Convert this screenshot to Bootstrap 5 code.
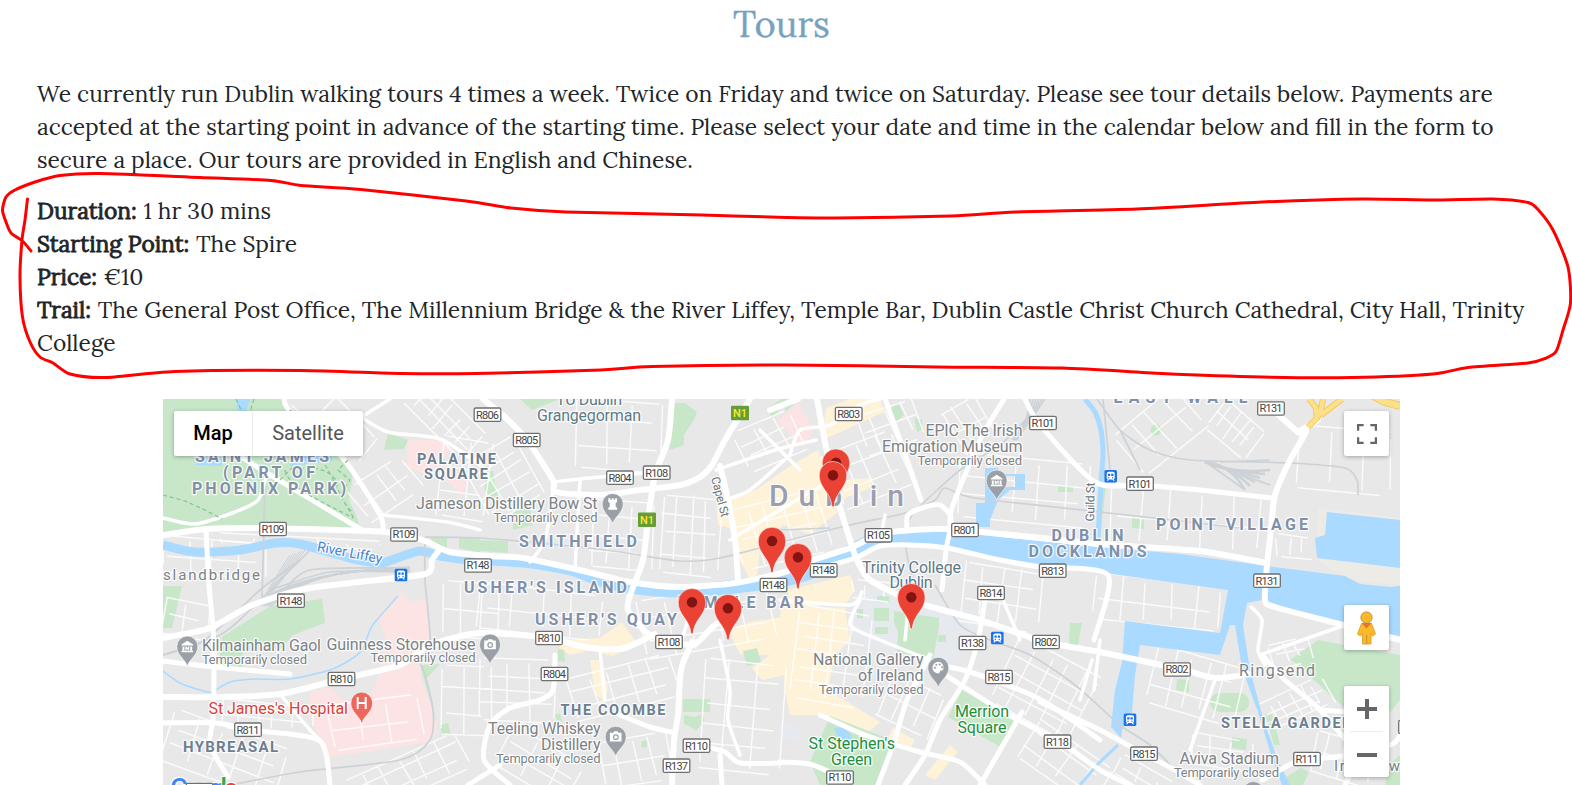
<!DOCTYPE html>
<html lang="en">
<head>
<meta charset="utf-8">
<meta name="viewport" content="width=device-width, initial-scale=1">
<title>Tours</title>
<link href="https://cdn.jsdelivr.net/npm/bootstrap@5.3.0/dist/css/bootstrap.min.css" rel="stylesheet">
<style>
  body { font-family: Lora, "Liberation Serif", serif; font-size: 22.740px; line-height: 33px; color: #212529; overflow: hidden; }
  .page-body { padding: 0 37px; }
  .page-title { font-size: 36.300px; line-height: 43px; color: #76a2c0; margin: 2px 9px 32px 0; -webkit-text-stroke: .3px #76a2c0; }
  .tour-intro { margin-bottom: 18px; }
  .tour-facts { margin-bottom: 40px; }
  .tour-facts strong { font-weight: 400; -webkit-text-stroke: .85px #212529; margin-right: .8px; }
  .map-frame { width: 1237px; height: 386px; margin-left: 126px; font-family: Roboto, "Liberation Sans", sans-serif; }
  .map-ctl { background: #fff; border-radius: 2px; box-shadow: 0 1px 4px rgba(0,0,0,.3); }
  .map-type { left: 11px; top: 12px; height: 45px; font-size: 20px; line-height: 44px; }
  .map-type .tab-map { width: 79px; color: #000; font-weight: 500; border-right: 1px solid #ececec; }
  .map-type .tab-sat { width: 110px; color: #565656; }
  .sq { width: 45px; height: 45px; right: 11px; }
  .full-btn { top: 12px; }
  .peg-btn { top: 206px; }
  .zoom-box { right: 11px; top: 287px; width: 45px; height: 91px; }
  .zoom-box hr { width: 33px; margin: 0; border-color: #bbb; }
  .scribble { left: 0; top: 0; pointer-events: none; }
  .hood { fill: #8090a9; font-weight: 700; }
  .place { fill: #6c7f91; font-weight: 700; }
  .poi { fill: #7c8287; }
  .edu { fill: #5c7a8a; }
  .green { fill: #1e8e3e; }
  .lab text { paint-order: stroke; stroke: #fff; stroke-width: 2.6px; stroke-opacity: .85; stroke-linejoin: round; }
</style>
</head>
<body>
<main class="container-fluid page-body">
  <h1 class="page-title text-center fw-normal">Tours</h1>
  <p class="tour-intro">We currently run Dublin walking tours 4 times a week. Twice on Friday and twice on Saturday. Please see tour details below. Payments are accepted at the starting point in advance of the starting time. Please select your date and time in the calendar below and fill in the form to secure a place. Our tours are provided in English and Chinese.</p>
  <p class="tour-facts"><strong>Duration:</strong> 1 hr 30 mins<br><strong>Starting Point:</strong> The Spire<br><strong>Price:</strong> €10<br><strong>Trail:</strong> The General Post Office, The Millennium Bridge &amp; the River Liffey, Temple Bar, Dublin Castle Christ Church Cathedral, City Hall, Trinity College</p>

  <div class="map-frame position-relative overflow-hidden">
    <svg class="d-block" width="1237" height="386" viewBox="163 399 1237 386">
      <defs>
        <symbol id="museum" viewBox="-7 -7 14 14"><path d="M-6-2 0-6 6-2V-1H-6zM-5 0H-3V4H-5zM3 0H5V4H3zM-6 4.5H6V6H-6zM-2 4V0H-1L0 1.5 1 0H2V4H1V2L0 3.5-1 2V4z" fill="#fff"/></symbol>
        <symbol id="camera" viewBox="-7 -7 14 14"><path fill-rule="evenodd" d="M-6-4H-2.5L-1.5-5.5H2L3-4H6V5H-6zM3.200.5A3 3 0 1 0-2.800.5 3 3 0 1 0 3.200.5" fill="#fff"/><circle cx=".2" cy=".5" r="1.700" fill="#fff"/></symbol>
        <symbol id="rook" viewBox="-7 -7 14 14"><path d="M-4.5-6H-2.5V-4.5H-1V-6H1V-4.5H2.5V-6H4.5V-2L3-1V2.5L4.5 4V6H-4.5V4L-3 2.5V-1L-4.5-2z" fill="#fff"/></symbol>
        <symbol id="palette" viewBox="-7 -7 14 14"><path d="M0-6A6 6 0 1 0 0 6C2 6 1 3.5 2.5 3H4.5C7-1 4-6 0-6" fill="#fff"/><g fill="#9aa0a6"><circle cx="-3.5" cy="0" r="1.1"/><circle cx="-2" cy="-3" r="1.1"/><circle cx="1.5" cy="-3.2" r="1.1"/><circle cx="4" cy="-.5" r="1.1"/></g></symbol>
      </defs>
      <rect x="163" y="399" width="1237" height="386" fill="#e8e8e8"/>

      <!-- campus and hospital grounds -->
      <g fill="#e6eaee"><path d="M853 600 868 589H905L980 616 968 645 950 668 930 668 850 635z"/><path d="M780 720 800 727V740L780 738zM853 595 880 588 905 600"/></g>
      <g fill="#fce4e4">
        <path d="M407 440H445L452 450 440 462 466 480 462 498 447 480 408 468z"/>
        <path d="M402 592 409 601 427 600 430 640 424 665 420 675 437 722 436 733 430 742 325 758 318 735 309 715 310 692 330 687 345 702 372 693 380 672 386 640 380 622 375 618z"/>
        <path d="M777 421 798 403 814 430 803 447z"/>
      </g>

      <!-- commercial blocks -->
      <g fill="#fef3d8">
        <path d="M826 408 850 399H880L884 412 866 420 845 430 822 440zM756 490 790 466 818 450 830 478 838 500 845 480 872 478 870 488 845 498 838 512 810 534 783 525 760 550 757 575 750 580 740 560 736 530 718 525 716 500z"/>
        <path d="M560 640 600 638 622 622 638 645 612 656 590 650 570 655 560 648zM590 660H600L608 688 605 700 595 695zM728 630 750 622 795 615 800 640 785 675 762 680 752 668 770 655 740 654zM780 605 845 608 850 640 835 655 828 690 880 722 865 735 825 715 790 715 785 690z"/>
        <path d="M788 590 850 575 855 590 845 605 790 607zM893 728 915 740 910 748 888 738zM950 745 958 752 935 780 925 775z"/>
      </g>

      <!-- parks -->
      <g fill="#c8e7c9">
        <path d="M163 399H284L290 411 342 457 353 474 349 500 356 515 360 528 260 526 207 529 163 535z"/>
        <path d="M388 433 408 440 404 449 384 450zM430 538H447V548H440zM459 538H480V553L459 548z"/>
        <path d="M520 399H560L532 410zM673 403H685L697 412 694 420 684 435V445L670 450 668 440 672 425zM470 540 508 541V553L470 550zM485 470 493 471 495 485 499 494 492 500 485 490zM513 510 530 508 533 525 513 530z"/>
        <path d="M163 586H182L172 628H163zM222 637 270 606 322 599 325 623 293 635 280 650H243V668L218 667zM420 665 440 664 427 678 432 700 436 722 427 690zM440 725 448 723 451 734 442 735z"/>
        <path d="M558 649 564 650 565 662 558 661zM743 651 757 648 761 662 747 666zM683 699H710V712H683zM684 715 694 717 702 714 705 720 696 731 691 727 684 724zM642 741 648 740 646 748 641 747zM554 715 560 713 562 722 557 720z"/>
        <path d="M877 596H889V602H877zM857 609H863V618H857zM874 608H889V621H874zM894 611 939 618V627L938 633 933 660 897 652 898 633 894 622zM875 627H888V634H875zM938 635H946V642H938z"/>
        <path d="M830 716 897 742 875 785H820L810 762zM962 690 1015 720 1000 747 948 717zM1070 623H1082L1078 645H1069z"/>
        <path d="M890 409 898 403 904 415 896 422zM914 418 922 420V430L917 432zM1058 486H1073V492H1058zM780 400 800 399 786 411zM767 408 782 399H790L772 418z"/>
        <circle cx="1156" cy="430" r="5.5"/>
        <path d="M1132 518 1144 520V529L1132 528zM1101 483 1106 484 1100 540 1096 538zM1177 679 1189 680V692L1176 690zM1232 737 1247 739 1246 750 1232 748zM1286 777 1301 768 1309 772 1303 785H1289zM1265 714 1272 713 1280 745 1274 745z"/>
        <rect x="1210" y="693" width="39" height="19" rx="9.5"/>
        <path d="M1290 660 1318 640 1400 655V700L1380 725 1345 708 1316 682 1300 665z"/>
        <path d="M1388 765 1400 755V785H1385z"/>
      </g>

      <!-- side streets, filled in by the script below -->
      <g id="minor" fill="none" stroke="#fff" stroke-opacity=".8" stroke-width="1.5"></g>

      <!-- water -->
      <g fill="#aadaff">
        <path d="M1318 508 1400 518V585L1350 580 1316 560z" fill="#edebe6"/>
        <path d="M1327 512 1400 520V568L1317 558 1315 538 1325 535z"/>
        <path d="M947 530 1025 538 1100 547 1180 554 1267 566 1345 576 1360 584 1390 587 1400 586V636L1343 624 1290 612 1268 602 1262 600 1247 603 1243 625 1250 670 1263 718 1277 758 1290 785H1282L1271 755 1260 718 1242 668 1235 625H1230L1220 655 1140 645 1135 675 1132 712 1122 730 1121 738 1111 727 1115 690 1122 662 1125 621 1220 633 1228 590 1090 571 1040 564 947 549z"/>
        <path d="M985 468H998V474H1025V490H1010L998 500 990 520V527H976V503H985zM998 476V487H1015V476z" fill-rule="evenodd"/>
        <path d="M236 399H250L246 412H238zM196 458H222V466L196 465zM290 457 332 452V461L290 466zM834 728 843 727 852 736 850 743 838 737z"/>
      </g>
      <g data-color="#aadaff">
        <path class="crv" data-w="9" data-p="163,545 195,552 240,550 275,543 300,544 350,558 380,563 400,557 420,551 440,556 470,560 523,563 570,571 603,583 637,590 680,593 723,590"/>
        <path class="crv" data-w="14" data-p="715,589 740,586 787,579 813,571 847,553 873,541 903,538 947,539"/>
        <path class="crv" data-w="5" data-p="1085,399 1095,412 1101,430 1103,455 1101,482 1098,538"/>
        <path class="crv" data-w="1.5" data-p="163,671 180,683 200,690 212,692 230,682 255,679 290,679 330,670 350,660 362,650 370,630 375,622 398,596"/>
        <path class="crv" data-w="3" data-p="1080,785 1098,764 1118,745"/>
      </g>

      <!-- railways and larger roads, filled in by the script below -->
      <g id="rails" fill="none" stroke="#cdd2d7" stroke-width="1.7"></g>
      <g id="streets" fill="none" stroke="#fff" stroke-linecap="round" stroke-linejoin="round"></g>
      <g fill="none" stroke="#f4c64f" stroke-width="6"><path d="M1308 427 1317 418 1321 410 1323 399M1317 420 1316 408 1309 399M1321 415 1342 399"/><path d="M1370 394 1385 402 1400 406" stroke-width="8"/></g>
      <g fill="none" stroke="#fde08a" stroke-width="4.400"><path d="M1308 427 1317 418 1321 410 1323 399M1317 420 1316 408 1309 399M1321 415 1342 399"/><path d="M1370 394 1385 402 1400 406" stroke-width="6.400"/></g>
      <g fill="none" stroke="#7fc596" stroke-width="1.2" stroke-dasharray="4 3">
        <path d="M163 495 185 501 205 510 222 519M236 399 244 416M254 399 250 412M290 410 310 425M348 460 338 470 350 480 340 495 355 520M285 470C290 490 320 500 353 518M300 470C320 462 345 480 335 490M325 465C335 480 340 500 352 512M280 480 295 465"/>
      </g>

      <g class="lab">
        <text class="hood" x="195" y="462" font-size="16" textLength="134">SAINT JAMES</text>
        <text class="hood" x="223" y="478" font-size="16" textLength="92">(PART OF</text>
        <text class="hood" x="192" y="494" font-size="16" textLength="154">PHOENIX PARK)</text>
        <text class="place" x="417" y="464" font-size="14.5" textLength="79">PALATINE</text>
        <text class="place" x="424" y="478.500" font-size="14.5" textLength="64">SQUARE</text>
        <text class="poi" x="416" y="508.500" font-size="16" textLength="181.500">Jameson Distillery Bow St</text>
        <text class="poi" x="493.500" y="522" font-size="13" textLength="104">Temporarily closed</text>
        <text x="316.500" y="551" font-size="14" textLength="66" fill="#4a85d4" stroke-width="0" transform="rotate(11 316.500 551)">River Liffey</text>
        <text class="poi" x="163" y="580" font-size="15" textLength="97">slandbridge</text>
        <text class="edu" x="556" y="404.500" font-size="16" textLength="66">TU Dublin</text>
        <text class="edu" x="537" y="420.500" font-size="16" textLength="104">Grangegorman</text>
        <text class="hood" x="519" y="547" font-size="16" textLength="118">SMITHFIELD</text>
        <text class="hood" x="464" y="593" font-size="16" textLength="163">USHER'S ISLAND</text>
        <text class="hood" x="535" y="625" font-size="16" textLength="142">USHER'S QUAY</text>
        <text class="hood" x="678" y="608" font-size="16" textLength="126">TEMPLE BAR</text>
        <text x="711" y="478" font-size="12" textLength="41" fill="#6b7075" transform="rotate(75 711 478)">Capel St</text>
        <text x="769" y="506" font-size="30" textLength="135" fill="#999fb0" font-weight="500">Dublin</text>
        <text class="poi" x="925.500" y="436" font-size="16" textLength="97">EPIC The Irish</text>
        <text class="poi" x="882" y="452" font-size="16" textLength="140.500">Emigration Museum</text>
        <text class="poi" x="917.500" y="464.500" font-size="13" textLength="104.500">Temporarily closed</text>
        <text class="edu" x="862" y="573" font-size="16" textLength="99">Trinity College</text>
        <text class="edu" x="889.500" y="588" font-size="16" textLength="43">Dublin</text>
        <text x="1094" y="521.500" font-size="12" textLength="39" fill="#6b7075" transform="rotate(-89 1094 521.500)">Guild St</text>
        <text class="hood" x="1051.500" y="541" font-size="16" textLength="72">DUBLIN</text>
        <text class="hood" x="1028.500" y="557" font-size="16" textLength="118">DOCKLANDS</text>
        <text class="hood" x="1113.500" y="403" font-size="16" textLength="134">EAST WALL</text>
        <text class="hood" x="1156" y="529.500" font-size="16" textLength="152">POINT VILLAGE</text>
        <text class="poi" x="202" y="651" font-size="16" textLength="119">Kilmainham Gaol</text>
        <text class="poi" x="202" y="664" font-size="13" textLength="105">Temporarily closed</text>
        <text class="poi" x="326.500" y="649.500" font-size="16" textLength="149">Guinness Storehouse</text>
        <text class="poi" x="370.500" y="662" font-size="13" textLength="105">Temporarily closed</text>
        <text x="208.500" y="714" font-size="16" textLength="139.500" fill="#db3f37">St James's Hospital</text>
        <text class="place" x="183" y="752" font-size="15" textLength="95">HYBREASAL</text>
        <text class="place" x="560.500" y="714.500" font-size="14.5" textLength="105">THE COOMBE</text>
        <text class="poi" x="488" y="734" font-size="16" textLength="112.500">Teeling Whiskey</text>
        <text class="poi" x="541" y="749.500" font-size="16" textLength="59.500">Distillery</text>
        <text class="poi" x="496" y="762.500" font-size="13" textLength="104.500">Temporarily closed</text>
        <text class="poi" x="813" y="664.500" font-size="16" textLength="110.500">National Gallery</text>
        <text class="poi" x="858" y="680.500" font-size="16" textLength="65.500">of Ireland</text>
        <text class="poi" x="819" y="693.500" font-size="13" textLength="104.500">Temporarily closed</text>
        <text class="green" x="955" y="717" font-size="16" textLength="54">Merrion</text>
        <text class="green" x="957.500" y="732.500" font-size="16" textLength="49">Square</text>
        <text class="green" x="808.500" y="749" font-size="16" textLength="86.500">St Stephen's</text>
        <text class="green" x="831" y="764.500" font-size="16" textLength="41">Green</text>
        <text class="poi" x="1239" y="675.500" font-size="16" textLength="76">Ringsend</text>
        <text class="place" x="1221" y="728" font-size="14.5" textLength="142">STELLA GARDENS</text>
        <text class="poi" x="1179.500" y="764" font-size="16" textLength="99.500">Aviva Stadium</text>
        <text class="poi" x="1174" y="777" font-size="13" textLength="105">Temporarily closed</text>
        <text class="poi" x="1334" y="771" font-size="15" textLength="76">Irishtown</text>
        <text x="170" y="798" font-size="27" textLength="68" font-weight="500"><tspan fill="#4285f4">G</tspan><tspan fill="#ea4335">o</tspan><tspan fill="#fbbc05">o</tspan><tspan fill="#4285f4">g</tspan><tspan fill="#34a853">l</tspan><tspan fill="#ea4335">e</tspan></text>
      </g>
      <g id="shields" font-size="11" text-anchor="middle"></g>
      <g id="stations"></g>
      <g id="poipins"></g>
      <g id="pins"></g>
    </svg>

    <div class="map-ctl map-type position-absolute d-flex text-center">
      <div class="tab-map">Map</div><div class="tab-sat">Satellite</div>
    </div>
    <div class="map-ctl sq full-btn position-absolute d-flex align-items-center justify-content-center">
      <svg width="20" height="20" viewBox="0 0 18 18" fill="#666"><path d="M0 0v6h2V2h4V0zM16 0h-4v2h4v4h2V0zM16 16h-4v2h6v-6h-2zM2 12H0v6h6v-2H2z"/></svg>
    </div>
    <div class="map-ctl sq peg-btn position-absolute d-flex align-items-center justify-content-center">
      <svg width="21" height="34" viewBox="0 0 21 34"><path d="M5.500 12.500H15.500L19.500 23 16.500 25 15 22V33H6.500V22L4.500 25 1.500 23z" fill="#fbb828" stroke="#d99a20" stroke-width=".8"/><path d="M5.500 12H15.500L10.500 17.500z" fill="#e2772e"/><circle cx="10.500" cy="6.500" r="5.600" fill="#fbb828" stroke="#b98a2c" stroke-width=".9"/><path d="M10.700 24V33" stroke="#b98a2c" stroke-width=".8"/></svg>
    </div>
    <div class="map-ctl zoom-box position-absolute d-flex flex-column align-items-center">
      <div class="flex-fill d-flex align-items-center"><svg class="d-block" width="20" height="20" viewBox="0 0 20 20"><path d="M8 0h4v8h8v4h-8v8H8v-8H0V8h8z" fill="#666"/></svg></div>
      <hr>
      <div class="flex-fill d-flex align-items-center"><svg class="d-block" width="20" height="20" viewBox="0 0 20 20"><path d="M0 8h20v4H0z" fill="#666"/></svg></div>
    </div>
  </div>
</main>

<svg class="scribble position-absolute" width="1572" height="785" viewBox="0 0 1572 785" fill="none" stroke="#f00" stroke-linecap="round" stroke-linejoin="round">
  <path class="crv" data-w="3" data-p="27.5,199 25,220 22,240 20,277 22.500,317 30,342 40,357 53,363 70,374 105,377.500 175,371.500 301,370.500 401,373.500 476,373.500 601,370 652,366.500 786,365 936,367 1062,368 1162,373.500 1262,377 1352,377.500 1433,374 1468,367.500 1528,363 1545,358.500 1556,351.500 1563,330 1570.500,303 1568,267 1553,230 1538,209.500 1528,202.500 1493,199 1432,200 1362,199 1262,202 1137,209 1016,212 951,216 836,218 786,217.500 702,215 566,212 511,208 466,201 361,189.500 301,185.500 271,180.500 200,177.500 100,173.500 60,175.500 35,182 15,190 6,197 2.500,210 6,222 11,233 22.500,241 31,251"/>
</svg>

<script src="https://cdn.jsdelivr.net/npm/bootstrap@5.3.0/dist/js/bootstrap.bundle.min.js"></script>
<script>
  // Smooth a list of points into a path through the midpoints' tangents.
  function smooth(str) {
    const p = str.trim().split(/\s+/).map(s => s.split(',').map(Number));
    let d = 'M' + p[0];
    for (let i = 0; i < p.length - 1; i++) {
      const a = p[i - 1] || p[i], b = p[i], c = p[i + 1], e = p[i + 2] || c;
      d += ` C${b[0] + (c[0] - a[0]) / 8},${b[1] + (c[1] - a[1]) / 8} ${c[0] - (e[0] - b[0]) / 8},${c[1] - (e[1] - b[1]) / 8} ${c}`;
    }
    return d;
  }
  document.querySelectorAll('.crv').forEach(el => {
    el.setAttribute('d', smooth(el.dataset.p));
    el.setAttribute('stroke-width', el.dataset.w);
    const g = el.closest('[data-color]');
    if (g) { el.setAttribute('stroke', g.dataset.color); el.setAttribute('fill', 'none'); }
  });
  const put = (id, html) => document.getElementById(id).insertAdjacentHTML('beforeend', html);

  const streets = {
    6: ['163,535 207,529 260,528 370,531 400,534 425,541 450,552 490,556 523,558 575,569 630,582 680,587 735,583 785,572 813,560 850,548 875,536 900,531 945,529 1000,534 1100,544',
        '163,638 210,628 250,606 300,590 350,583 425,574 432,560 440,549',
        '163,697 220,697 280,694 341,679 400,665 430,645 480,633 549,638 575,645 600,649 625,648 655,634',
        '483,399 505,417 527,440 553,480 556,492 600,495 640,490 680,485 700,477 712,465 725,440 750,399',
        '672,399 668,440 655,475 648,520 643,560 632,590 628,610 650,635 690,645 700,640 715,625 735,615',
        '817,399 823,432 835,490 850,540 857,560 870,580 910,600 950,612 980,620 1046,642 1100,652 1180,669 1215,678 1250,674',
        '692,642 681,670 678,715 674,740 672,785','798,399 770,410', '1002,534 1100,544 1200,551 1266,563',
        '720,466 728,500 735,540 738,580','1271,408 1298,432 1306,432 1290,460 1275,495 1271,530 1267,565 1265,600 1275,607 1343,625 1400,640',
        '1298,432 1318,420'],
    5: ['1025,399 1040,425 1095,482 1140,485 1200,490 1272,498','1004,399 980,440 952,508 950,530 946,550 942,590',
        '813,570 855,558 880,546 910,545 947,548 1000,560 1040,567 1108,575 1094,640','907,530 908,515 925,507 940,505 950,515 952,530',
        '885,399 900,440 921,500','985,600 978,640 965,680 940,720 925,755 905,785','1022,712 980,785','940,665 970,672 1020,690 1050,705 1100,740',
        '935,668 1000,710 1060,742 1100,770 1130,785','820,715 865,735 920,752 960,762 985,785','895,740 878,785','895,740 907,700 930,655',
        '1040,702 1100,730 1144,754 1175,770 1200,785','780,762 810,764 840,777','700,745 725,752 740,763 780,763','720,755 722,785',
        '555,655 553,690 540,700 510,708 490,725 484,760 510,785','468,785 500,765','620,715 650,727 675,733','1262,780 1300,760 1335,757 1390,745 1400,735',
        '1262,655 1285,680 1320,710 1355,755 1345,785','1320,710 1350,712','284,399 290,411 342,457 380,515 383,531','243,458 267,473 362,530',
        '206,530 209,585 213,628 214,668 213,718 210,745 228,777','163,723 215,723 260,731 320,741 330,785','163,661 215,667 290,674'],
    3.5:['835,478 780,510 730,540','716,470 775,450 816,440','790,455 800,430 830,425 860,405 880,399','790,455 750,490 725,500','390,399 360,418','163,518 195,524 235,512 258,500 267,473',
        '358,415 388,432 440,439 480,465','383,515 447,522 480,530','530,562 545,540 553,492','575,569 580,480','553,482 590,478 657,472','880,540 885,515','910,590 905,640','860,600 850,625 880,640 930,660','1003,600 1020,640','1100,640 1094,690','600,650 605,700','720,640 730,690 728,720 740,755','680,645 688,620','780,600 850,605 862,592','1092,660 1080,700','1215,680 1190,750','1345,625 1260,655','1251,607 1262,620 1258,650 1265,665','760,430 800,470','280,694 310,730 322,742']
  };
  for (const w in streets) streets[w].forEach(p => put('streets', `<path d="${smooth(p)}" stroke-width="${w}"/>`));

  ['163,655 220,635 250,610 290,570 310,550','163,655 205,640 260,590 300,560','425,537 480,538 560,545 620,552 680,561 720,558 790,540 850,525 905,513 935,500 945,488 975,498 1100,512 1240,528','425,537 425,580 430,640 420,660 425,675 433,710 430,740 400,760 300,772 230,785',
   '912,580 905,540 912,515 960,470 1000,445 1035,410','935,585 960,625 990,640 1030,655 1075,685 1120,725 1150,745 1175,770','1097,399 1120,430 1150,450 1190,460 1290,463 1345,468 1357,480 1358,495','1210,465 1245,490','1210,463 1270,485','1120,430 1140,470','1103,399 1110,470','780,530 830,528','270,590 330,572 400,572','280,595 310,570 400,568','1220,462 1270,460','590,400 595,385','357,399 357,385','265,470 264,525 262,600'].forEach(p => put('rails', `<path d="${smooth(p)}"/>`));
  for (let i = 0; i < 6; i++) put('rails', `<path d="M${255 + i * 3} 606C${275 + i * 5} ${585 - i} ${330 + i * 3} ${570 - i} 410 ${567 + i}"/><path d="M${265 + i} 595Q${280 + i * 2} 570 ${290 + i * 3} ${555 - i}" stroke-width="1"/><path d="M1205 462Q1230 ${464 + i * 2} ${1245 + i * 5} ${490 - i * 4}" stroke-width="2.5"/><path d="M${1030 + i * 3} 399Q1030 420 ${1012 + i} 440"/>`);

  // Blocks of side streets: x, y, width, height, angle, columns, rows.
  [[400,400,85,32,45,6,3],[470,450,65,60,60,5,3],[575,400,85,70,3,3,3],[590,500,60,70,4,3,4],[660,495,60,80,4,4,4],[740,420,60,40,-25,3,3],[735,500,90,60,-14,5,4],[830,440,75,60,-22,4,3],[860,405,60,40,-20,4,2],[950,400,40,50,-30,3,2],
   [960,460,130,60,5,5,3],[1110,490,150,60,5,5,2],[1120,405,80,50,-40,4,2],[1210,410,50,35,40,5,2],[960,565,80,60,8,4,3],[1000,655,90,70,28,5,4],[1095,580,125,45,6,5,2],[1150,655,90,60,15,5,3],[1020,740,90,45,35,4,3],[880,680,60,50,25,3,2],
   [480,590,120,45,6,4,2],[480,660,75,60,2,3,4],[570,665,105,45,-15,5,3],[700,660,80,110,5,3,5],[600,735,70,50,-10,4,2],[500,745,80,40,30,3,3],[163,540,100,35,4,4,2],[220,537,160,10,3,5,1],[163,600,45,35,10,2,2],[220,700,90,30,5,5,3],[165,730,120,50,20,5,3],
   [330,700,90,45,-8,3,2],[345,755,120,40,-25,6,3],[440,665,50,70,2,2,3],[440,580,60,60,3,3,2],[355,470,60,40,-35,4,2],[1260,690,70,30,-25,6,3],[1270,640,40,25,-15,3,2],[1190,735,60,30,8,3,2],[1310,735,60,45,15,4,2],[1300,430,90,60,4,3,1],[795,610,70,90,8,4,6],[640,590,130,60,-10,5,3],[850,580,50,20,4,3,1],[290,400,90,40,45,3,1],[1115,770,60,20,30,3,2],[440,440,50,80,8,2,3],[1275,535,40,25,5,3,1]].forEach(([x,y,w,h,a,nc,nr], k) => {
    let d = '';
    for (let i = 0; i <= nc; i++) { const q = x + w * i / nc + ((i * 7 + k) % 5) - 2; d += `M${q} ${y + (i * 5 + k) % 7}L${q + (i + k) % 4} ${y + h - (i * 3 + k) % 9}`; }
    for (let j = 0; j <= nr; j++) { const q = y + h * j / nr + ((j * 3 + k) % 5) - 2; d += `M${x + (j * 5 + k) % 9} ${q}L${x + w - (j * 7 + k) % 13} ${q + (j + k) % 3}`; }
    put('minor', `<path d="${d}" transform="rotate(${a} ${x + w / 2} ${y + h / 2})"/>`);
  });

  [['R109',273,529],['R109',404,534.5],['R148',478,565.5],['R806',487.5,414.7],['R805',526.7,440],['R804',620,477.7],['R108',656.7,472.7],['R148',773.5,585],['R803',848.7,414],['R101',1043,423],['R105',878.5,535.3],['R801',965,530],['R148',823.7,570.3],['R813',1052.7,570.7],['R814',991,593],['R131',1271,408.5],['R101',1140,483.7],['R131',1267,580.7],['R148',291,600.7],['R810',341.5,679],['R811',248,729.7],['R111',199.5,790],['R810',549,638],['R108',669,642],['R804',554.5,674],['R110',696.5,745.7],['R137',676.5,765.7],['R138',972.5,643],['R802',1046,642],['R815',999,677],['R118',1057.5,741.7],['R110',840,777.5],['R802',1177,669.5],['R815',1144,753.7],['R111',1307,759],['R131',1412,727]].forEach(([t,x,y]) =>
    put('shields', `<rect x="${x - 13.3}" y="${y - 6.7}" width="26.600" height="13.400" rx="1.500" fill="#fff" stroke="#6f6f6f" stroke-width="1.300"/><text x="${x}" y="${y + 3.9}" fill="#444" textLength="23">${t}</text>`));
  [[740,413],[647,519.7]].forEach(([x,y]) => put('shields', `<rect x="${x - 9}" y="${y - 7.3}" width="18" height="14.600" rx="1" fill="#659d38"/><text x="${x}" y="${y + 4}" fill="#ffea2e" font-weight="500">N1</text>`));

  [[401,575],[1110.7,476.3],[997.3,638],[1130,719.7]].forEach(([x,y]) => put('stations', `<g transform="translate(${x} ${y})"><rect x="-6.300" y="-6.300" width="12.600" height="12.600" rx="1.500" fill="#1a73e8"/><path d="M-4-3Q-4-4.500-2-4.500H2Q4-4.500 4-3V2L3 3 4 4.500H2.500L1.800 3.300H-1.800L-2.500 4.500H-4L-3 3-4 2z" fill="#fff"/><path d="M-2.800-2.500H-.5V-.2H-2.800zM.5-2.500H2.800V-.2H.5z" fill="#1a73e8"/><circle cx="-2" cy="1.500" r=".7" fill="#1a73e8"/><circle cx="2" cy="1.500" r=".7" fill="#1a73e8"/></g>`));

  const drop = 'M0 20C-1.500 13-10.500 9-10.500 0A10.500 10.500 0 1 1 10.500 0C10.500 9 1.500 13 0 20z';
  [['rook',612.7,504],['museum',996.7,480.5],['museum',187.300,646.5],['camera',490,644.5],['camera',615.7,736.7],['palette',938.3,667.7],['rook',1253.3,792]].forEach(([n,x,y]) =>
    put('poipins', `<g transform="translate(${x} ${y})"><path d="${drop}" fill="#9aa0a6" stroke="#fff" stroke-width=".6"/><use href="#${n}" x="-6.800" y="-6.800" width="13.600" height="13.600"/></g>`));
  put('poipins', `<g transform="translate(361.700 703)"><path d="${drop}" fill="#ee675c"/><path d="M-5-6H-3V-1H3V-6H5V6H3V1H-3V6H-5z" fill="#fff"/></g>`);

  [[836,462.7],[833,475.2],[772,541],[798,557.3],[692,602.3],[728,608.2],[911.3,597.3]].forEach(([x,y]) =>
    put('pins', `<g transform="translate(${x} ${y})"><path d="M-1 31.500C-2 17-13.800 13-13.800 0A13.800 13.800 0 1 1 13.800 0C13.800 13 2 17 1 31.500z" fill="#ea4335" stroke="#fff" stroke-opacity=".7" stroke-width=".8"/><circle r="5.200" fill="#811411"/></g>`));
</script>
</body>
</html>
